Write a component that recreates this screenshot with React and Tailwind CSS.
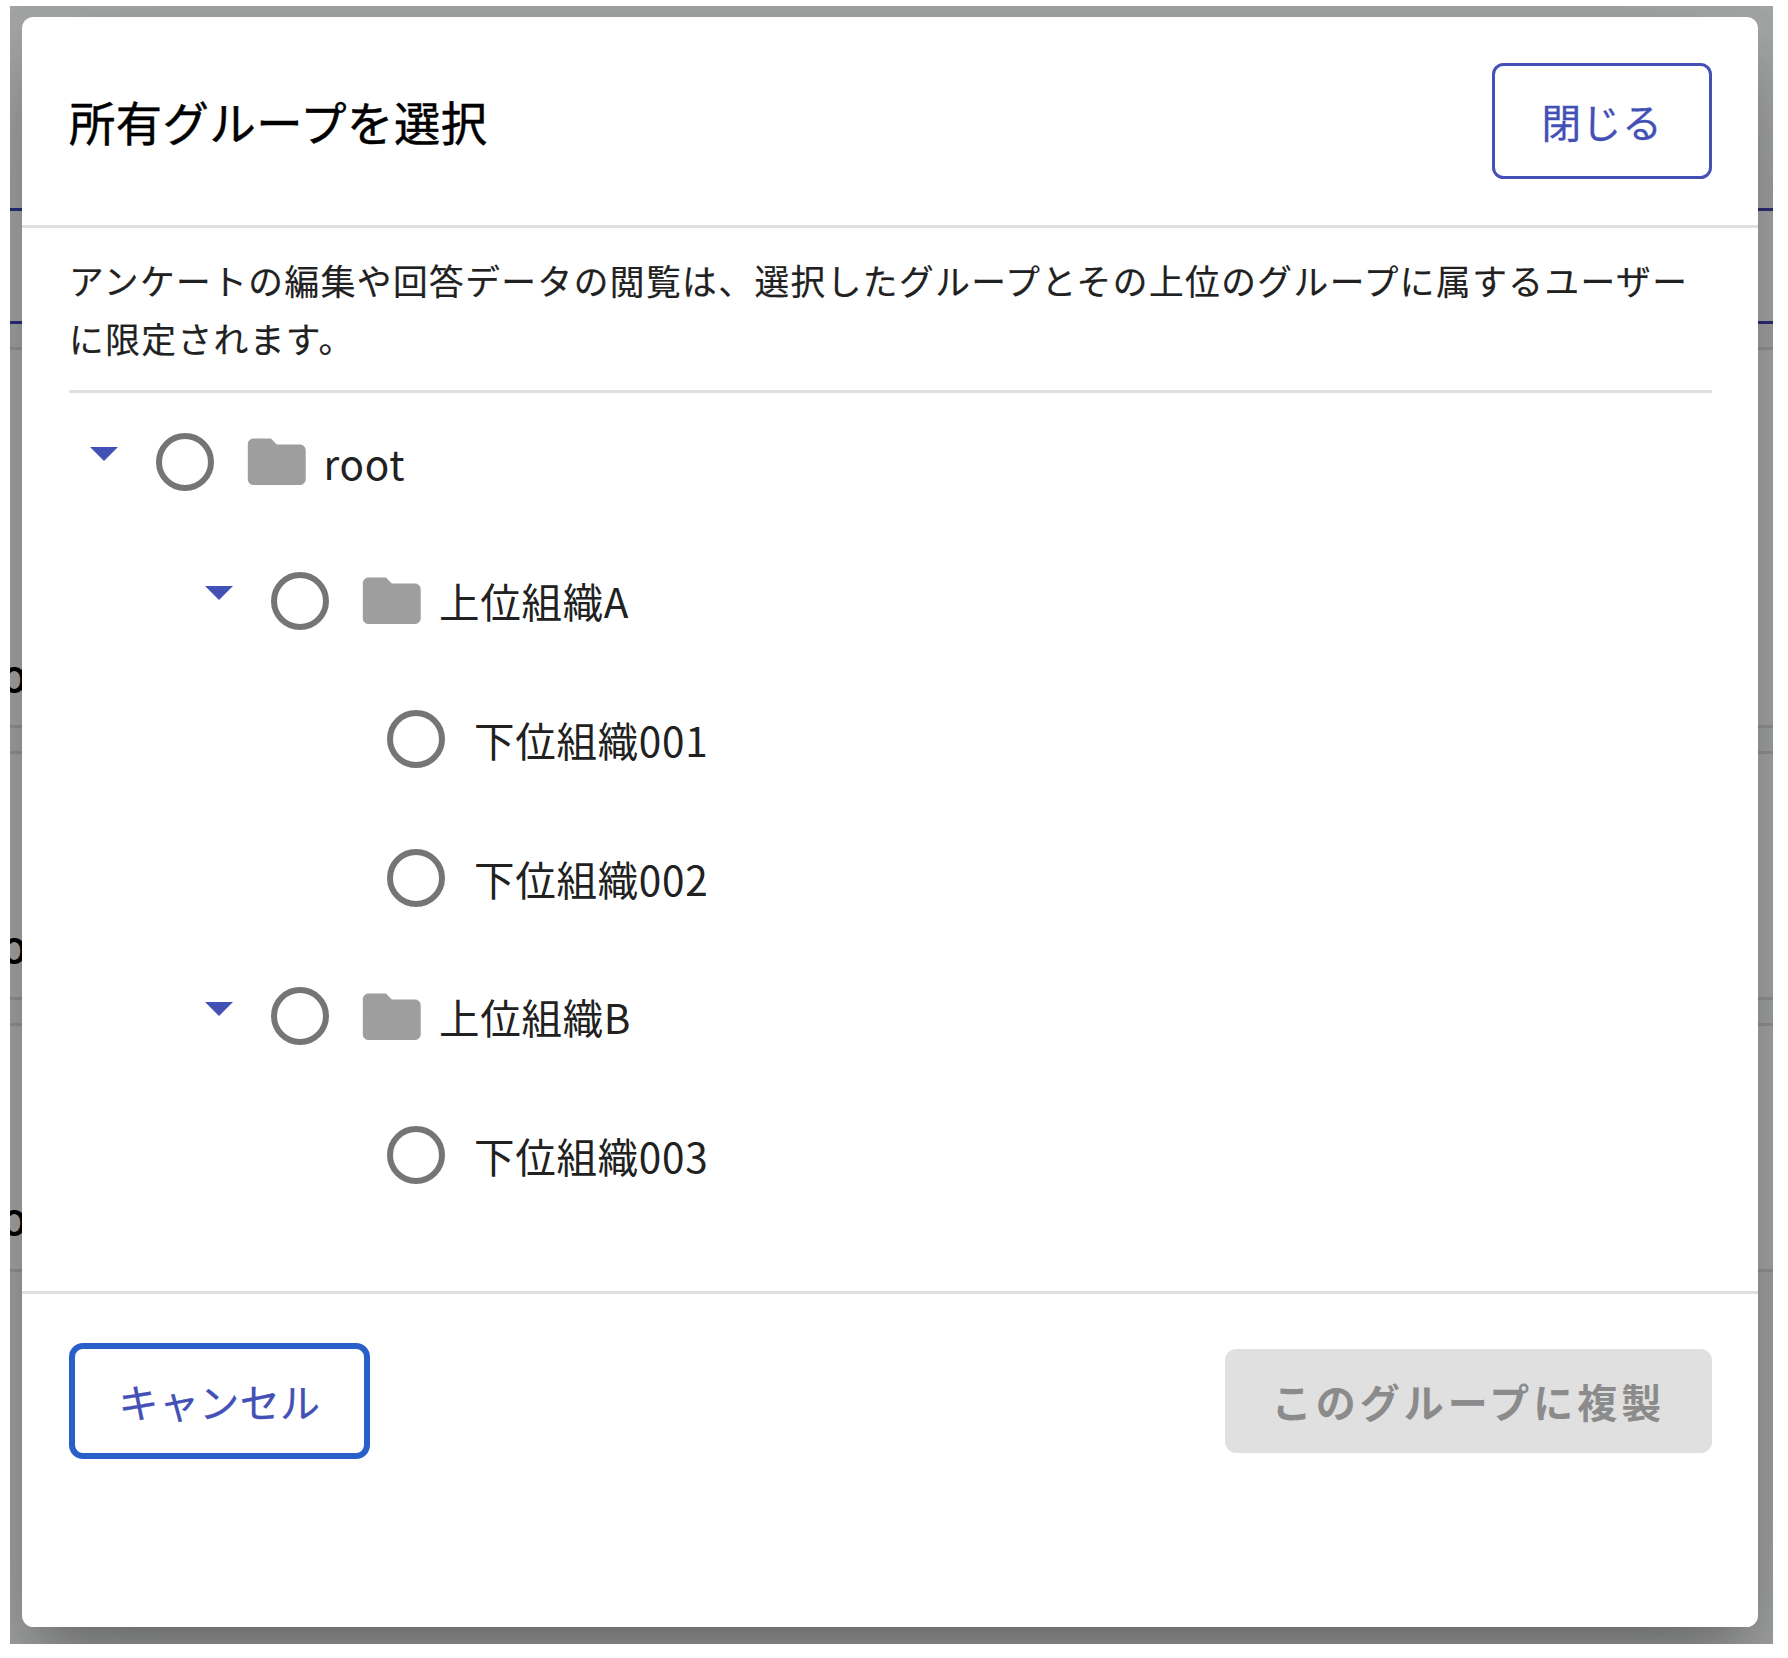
const tree = [
  { label: 'root', depth: 0, folder: true },
  { label: '上位組織A', depth: 1, folder: true },
  { label: '下位組織001', depth: 2 },
  { label: '下位組織002', depth: 2 },
  { label: '上位組織B', depth: 1, folder: true },
  { label: '下位組織003', depth: 2 },
];

const indents = ['pl-0', 'pl-[115.5px]', 'pl-[231px]'];

function FolderIcon() {
  return (
    <svg viewBox="0 0 24 24" className="w-[69.5px] h-[69.5px] shrink-0" fill="#9e9e9e">
      <path d="M10 4H4c-1.1 0-1.99.9-1.99 2L2 18c0 1.1.9 2 2 2h16c1.1 0 2-.9 2-2V8c0-1.1-.9-2-2-2h-8l-2-2z" />
    </svg>
  );
}

function TreeRow({ label, depth, folder }) {
  return (
    <li className={`flex h-[138.6px] ${indents[depth]}`}>
      <div className="w-[77px] shrink-0 pl-[11px] pt-[14.5px]">
        {folder && (
          <svg viewBox="0 0 28 14" className="w-[28px] h-[14px]" fill="#4350b5">
            <path d="M0 0h28L14 14z" />
          </svg>
        )}
      </div>
      <label className="flex items-center h-[58px] cursor-pointer">
        <span className="w-[58px] h-[58px] shrink-0 rounded-full border-[6px] border-[#757575]" />
        {folder ? <span className="ml-[28px] mr-[12px]"><FolderIcon /></span> : <span className="w-[29px]" />}
        <span className="pt-[1.5px] text-[40.5px] leading-[58px] tracking-[0.72px] text-[#212121] whitespace-nowrap">{label}</span>
      </label>
    </li>
  );
}

function Background() {
  return (
    <div className="h-full flex flex-col bg-[#a8aaa9]">
      <div className="h-[202px] shrink-0" />
      <div className="h-[116px] shrink-0 bg-[#adadad] border-y-[3px] border-[#2c3277]" />
      <div className="h-[26px] shrink-0 border-b-[3px] border-[#999999]" />
      <div className="h-[375px] shrink-0 bg-[#adadad]" />
      <div className="h-[29px] shrink-0 bg-[#a8aaab] border-y-[3px] border-[#999999]" />
      <div className="h-[243px] shrink-0 bg-[#adadad]" />
      <div className="h-[29px] shrink-0 bg-[#a8aaab] border-y-[3px] border-[#999999]" />
      <div className="h-[243px] shrink-0 bg-[#adadad]" />
      <div className="h-[3px] shrink-0 bg-[#999999]" />
    </div>
  );
}

function ClippedLetter({ className }) {
  return (
    <span className={`absolute left-[-9px] text-[43px] leading-[60px] font-medium text-black ${className}`}>o</span>
  );
}

export default function App() {
  return (
    <div className="w-[1788px] h-[1658px] bg-white pl-[10px] pt-[6px] font-['Noto_Sans_CJK_JP',sans-serif]">
      <div className="relative w-[1762.5px] h-[1638px] overflow-hidden">
        <Background />
        <ClippedLetter className="top-[637px]" />
        <ClippedLetter className="top-[908px]" />
        <ClippedLetter className="top-[1180px]" />

        <div className="absolute left-[12.4px] top-[10.6px] w-[1735.6px] h-[1610px] rounded-[11.5px] bg-white flex flex-col shadow-[0_32px_43px_-20px_rgba(0,0,0,0.2),0_69px_110px_9px_rgba(0,0,0,0.14),0_26px_133px_23px_rgba(0,0,0,0.12)]">
          <header className="h-[211.4px] shrink-0 flex items-start justify-between pl-[46.6px] pr-[46px] pt-[46.4px] border-b-[3px] border-[#e0e0e0]">
            <h2 className="text-[46.3px] leading-[116px] tracking-[0.52px] text-black [-webkit-text-stroke:0.5px_#000]">所有グループを選択</h2>
            <button className="w-[220px] h-[116px] rounded-[11.5px] border-[3px] border-[#4350b5] text-[#4350b5] text-[39.6px] tracking-[0.8px] [-webkit-text-stroke:0.3px_#4350b5]">
              閉じる
            </button>
          </header>

          <main className="h-[1066px] shrink-0 pl-[46.6px] pr-[46px] pt-[23px] border-b-[3px] border-[#e0e0e0]">
            <p className="h-[142px] text-[34.7px] leading-[58px] tracking-[1.46px] text-[#212121] border-b-[3px] border-[#e0e0e0] break-all [-webkit-text-stroke:0.2px_#212121]">
              アンケートの編集や回答データの閲覧は、選択したグループとその上位のグループに属するユーザーに限定されます。
            </p>
            <ul className="pt-[40px] pl-[10px]">
              {tree.map((node) => (
                <TreeRow key={node.label} {...node} />
              ))}
            </ul>
          </main>

          <footer className="flex items-start justify-between pl-[46.6px] pr-[46px] pt-[49px]">
            <button className="w-[301px] h-[116px] rounded-[14px] border-[6px] border-[#285fc9] text-[#4350b5] text-[40px] tracking-[0.4px] [-webkit-text-stroke:0.3px_#4350b5]">
              キャンセル
            </button>
            <button disabled className="mt-[6px] w-[487px] h-[104px] rounded-[11.5px] bg-[#e0e0e0] text-[#8b8b8b] text-[40px] tracking-[4px] font-bold">
              このグループに複製
            </button>
          </footer>
        </div>
      </div>
    </div>
  );
}
